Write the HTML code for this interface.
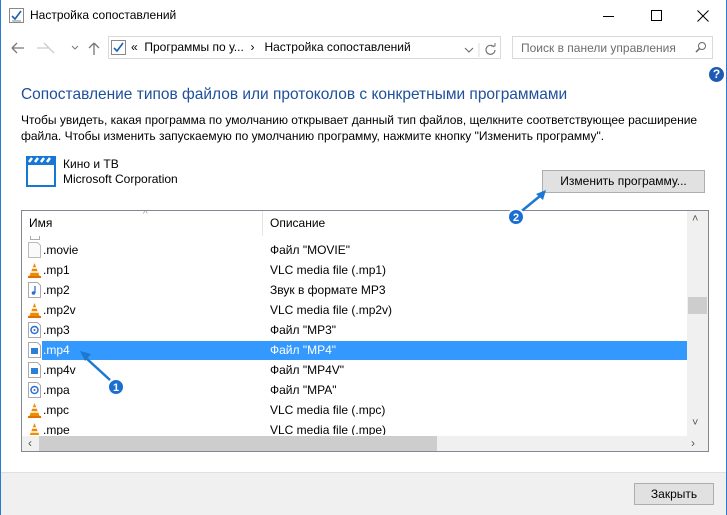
<!DOCTYPE html>
<html><head><meta charset="utf-8"><style>
*{margin:0;padding:0;box-sizing:border-box}
body{width:727px;height:515px;overflow:hidden;background:#fff;font-family:"Liberation Sans","DejaVu Sans",sans-serif;font-size:12px;color:#000;position:relative}
.a{position:absolute;white-space:nowrap}
.row{position:absolute;left:22px;width:665px;height:20px;line-height:20px;font-size:12px}
.row .n{position:absolute;left:21px}
.row .d{position:absolute;left:248px}
.row .ic{position:absolute;left:6px;top:2px;width:13px;height:16px}
</style></head><body>
<div class="a" style="left:0;top:0;width:727px;height:515px;border:1px solid #2b79d6;border-top:none"></div>
<svg class="a" style="left:9px;top:8px" width="15" height="15"><rect x="0.5" y="0.5" width="14" height="14" fill="#fff" stroke="#888"/><path d="M3 8l3 3 6-8" stroke="#1c5fb5" stroke-width="1.6" fill="none"/><path d="M3 13h9" stroke="#888"/></svg>
<div class="a" style="left:30px;top:8px;font-size:12px">Настройка сопоставлений</div>
<div class="a" style="left:603px;top:16px;width:11px;height:1px;background:#000"></div>
<div class="a" style="left:651px;top:10px;width:11px;height:11px;border:1px solid #000"></div>
<svg class="a" style="left:697px;top:10px" width="12" height="12"><path d="M0.5 0.5l11 11M11.5 0.5l-11 11" stroke="#000"/></svg>
<svg class="a" style="left:10px;top:40px" width="100" height="16"><path d="M2 8h12M2 8l5-5M2 8l5 5" stroke="#777" stroke-width="1.3" fill="none"/><path d="M31 8h12M43 8l-5-5M43 8l5 5" stroke="#ccc" stroke-width="1.3" fill="none" transform="translate(-4 0)"/><path d="M62 6l3 3 3-3" stroke="#777" fill="none"/><path d="M84 15V3M84 3l-5 5M84 3l5 5" stroke="#777" stroke-width="1.3" fill="none"/></svg>
<div class="a" style="left:108px;top:36px;width:393px;height:23px;border:1px solid #d9d9d9"></div>
<svg class="a" style="left:111px;top:40px" width="15" height="15"><rect x="0.5" y="0.5" width="14" height="14" fill="#fff" stroke="#888"/><path d="M3 8l3 3 6-8" stroke="#1c5fb5" stroke-width="1.6" fill="none"/></svg>
<div class="a" style="left:131px;top:40px;font-size:12px">«&nbsp; Программы по у... &nbsp;›&nbsp;&nbsp; Настройка сопоставлений</div>
<svg class="a" style="left:462px;top:43px" width="40" height="14"><path d="M3 5l4 4 4-4" stroke="#666" fill="none"/><path d="M17 0v14" stroke="#ddd"/><path d="M32 4a4.5 4.5 0 1 0 1 3" stroke="#777" fill="none" stroke-width="1.2"/><path d="M29 3h4V0" stroke="#777" fill="none"/></svg>
<div class="a" style="left:512px;top:36px;width:201px;height:23px;border:1px solid #d9d9d9"></div>
<div class="a" style="left:521px;top:41px;color:#6d6d6d;font-size:12px">Поиск в панели управления</div>
<svg class="a" style="left:695px;top:41px" width="12" height="13"><circle cx="7" cy="5" r="3.5" stroke="#666" fill="none"/><path d="M4.5 7.5L1 11" stroke="#666" stroke-width="1.5"/></svg>
<div class="a" style="left:709px;top:67px;width:15px;height:15px;border-radius:50%;background:#1c5ab4;color:#fff;font-weight:bold;font-size:12px;text-align:center;line-height:15px">?</div>
<div class="a" style="left:21px;top:86px;font-size:16px;color:#1e4f9a;transform:scaleX(0.968);transform-origin:0 0">Сопоставление типов файлов или протоколов с конкретными программами</div>
<div class="a" style="left:21px;top:112px;font-size:12px;line-height:16px">Чтобы увидеть, какая программа по умолчанию открывает данный тип файлов, щелкните соответствующее расширение<br>файла. Чтобы изменить запускаемую по умолчанию программу, нажмите кнопку "Изменить программу".</div>
<svg class="a" style="left:26px;top:156px" width="30" height="32"><rect x="0" y="0" width="30" height="31" fill="#1678d4"/><rect x="2" y="9" width="26" height="20" fill="#fff"/><path d="M3 6l3-4M9 6l3-4M15 6l3-4M21 6l3-4" stroke="#fff" stroke-width="2.5"/></svg>
<div class="a" style="left:63px;top:157px;font-size:12px;line-height:15px">Кино и ТВ<br>Microsoft Corporation</div>
<div class="a" style="left:542px;top:170px;width:163px;height:23px;background:#e1e1e1;border:1px solid #adadad;text-align:center;line-height:21px;font-size:12px">Изменить программу...</div>
<div class="a" style="left:21px;top:210px;width:688px;height:242px;border:1px solid #828790;overflow:hidden">
 <div class="a" style="left:0;top:0;width:665px;height:25px;line-height:25px">
  <span class="a" style="left:7px">Имя</span>
  <span class="a" style="left:121px;top:-9px;color:#999;font-size:10px">^</span>
  <div class="a" style="left:240px;top:0;width:1px;height:25px;background:#e5e5e5"></div>
  <span class="a" style="left:248px">Описание</span>
 </div>
 <div class="a" style="left:8px;top:25px;width:10px;height:4px;border:1px solid #aaa;border-top:none"></div>
 <div class="a" style="left:665px;top:0;width:21px;height:225px;background:#f0f0f0"></div>
 <div class="a" style="left:666px;top:86px;width:19px;height:17px;background:#cdcdcd"></div>
 <span class="a" style="left:670px;top:2px;color:#555;font-size:11px">˄</span>
 <span class="a" style="left:670px;top:206px;color:#555;font-size:11px">˅</span>
 <div class="a" style="left:0;top:225px;width:686px;height:16px;background:#f0f0f0"></div>
 <div class="a" style="left:17px;top:225px;width:398px;height:15px;background:#cdcdcd"></div>
 <span class="a" style="left:6px;top:225px;color:#555;font-size:12px">‹</span>
 <span class="a" style="left:669px;top:225px;color:#555;font-size:12px">›</span>
</div>
<div style="position:absolute;left:0;top:0">
<div class="row" style="top:240px"><svg class="ic"><path d="M0.5 0.5h9l3 3v12h-12z" fill="#fafafa" stroke="#bbb"/></svg><span class="n">.movie</span><span class="d">Файл "MOVIE"</span></div>
<div class="row" style="top:260px"><svg class="ic"><path d="M6.5 1L1 15h11z" fill="#f08a00"/><path d="M3 10h7M4.5 6h4" stroke="#fff" stroke-width="1.5"/><rect x="0" y="14" width="13" height="2" fill="#e07000"/></svg><span class="n">.mp1</span><span class="d">VLC media file (.mp1)</span></div>
<div class="row" style="top:280px"><svg class="ic"><path d="M0.5 0.5h9l3 3v12h-12z" fill="#fff" stroke="#aaa"/><path d="M7 4v7" stroke="#2a6fd0" stroke-width="1.3"/><circle cx="5.5" cy="11" r="1.8" fill="#2a6fd0"/></svg><span class="n">.mp2</span><span class="d">Звук в формате MP3</span></div>
<div class="row" style="top:300px"><svg class="ic"><path d="M6.5 1L1 15h11z" fill="#f08a00"/><path d="M3 10h7M4.5 6h4" stroke="#fff" stroke-width="1.5"/><rect x="0" y="14" width="13" height="2" fill="#e07000"/></svg><span class="n">.mp2v</span><span class="d">VLC media file (.mp2v)</span></div>
<div class="row" style="top:320px"><svg class="ic"><path d="M0.5 0.5h9l3 3v12h-12z" fill="#fff" stroke="#aaa"/><circle cx="6.5" cy="8" r="3.5" fill="none" stroke="#2a6fd0" stroke-width="1.5"/><circle cx="6.5" cy="8" r="1" fill="#2a6fd0"/></svg><span class="n">.mp3</span><span class="d">Файл "MP3"</span></div>
<div class="row" style="top:340px"><svg class="ic"><path d="M0.5 0.5h9l3 3v12h-12z" fill="#fff" stroke="#aaa"/><rect x="3" y="6" width="7" height="6" fill="#2a7fd6"/></svg><div class="a" style="left:20px;top:1px;width:645px;height:19px;background:#3399ff"></div><span class="n" style="color:#fff">.mp4</span><span class="d" style="color:#fff">Файл "MP4"</span></div>
<div class="row" style="top:360px"><svg class="ic"><path d="M0.5 0.5h9l3 3v12h-12z" fill="#fff" stroke="#aaa"/><rect x="3" y="6" width="7" height="6" fill="#2a7fd6"/></svg><span class="n">.mp4v</span><span class="d">Файл "MP4V"</span></div>
<div class="row" style="top:380px"><svg class="ic"><path d="M0.5 0.5h9l3 3v12h-12z" fill="#fff" stroke="#aaa"/><circle cx="6.5" cy="8" r="3.5" fill="none" stroke="#2a6fd0" stroke-width="1.5"/><circle cx="6.5" cy="8" r="1" fill="#2a6fd0"/></svg><span class="n">.mpa</span><span class="d">Файл "MPA"</span></div>
<div class="row" style="top:400px"><svg class="ic"><path d="M6.5 1L1 15h11z" fill="#f08a00"/><path d="M3 10h7M4.5 6h4" stroke="#fff" stroke-width="1.5"/><rect x="0" y="14" width="13" height="2" fill="#e07000"/></svg><span class="n">.mpc</span><span class="d">VLC media file (.mpc)</span></div>
<div class="row" style="top:420px;height:15px;overflow:hidden"><svg class="ic"><path d="M6.5 1L1 15h11z" fill="#f08a00"/><path d="M3 10h7M4.5 6h4" stroke="#fff" stroke-width="1.5"/></svg><span class="n">.mpe</span><span class="d">VLC media file (.mpe)</span></div>
</div>
<svg class="a" style="left:0;top:0" width="727" height="515">
<path d="M110 380L86 358" stroke="#1c78d0" stroke-width="2.5"/><path d="M80 351l11 3-6 7z" fill="#1c78d0"/>
<path d="M518 214L540 196" stroke="#1c78d0" stroke-width="2.5"/><path d="M546 190l-3 10-7-6z" fill="#1c78d0"/>
<circle cx="116" cy="387" r="8" fill="#1a6fd0" stroke="#fff" stroke-width="2"/>
<circle cx="516" cy="217" r="8" fill="#1a6fd0" stroke="#fff" stroke-width="2"/>
<text x="116" y="391" fill="#fff" font-size="11" font-weight="bold" text-anchor="middle" font-family="Liberation Sans">1</text>
<text x="516" y="221" fill="#fff" font-size="11" font-weight="bold" text-anchor="middle" font-family="Liberation Sans">2</text>
</svg>
<div class="a" style="left:1px;top:472px;width:725px;height:43px;background:#f0f0f0;border-top:1px solid #dfdfdf"></div>
<div class="a" style="left:634px;top:483px;width:80px;height:22px;background:#e1e1e1;border:1px solid #adadad;text-align:center;line-height:20px;font-size:12px">Закрыть</div>
</body></html>
